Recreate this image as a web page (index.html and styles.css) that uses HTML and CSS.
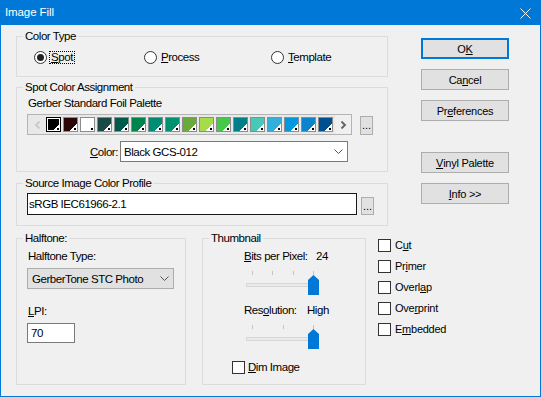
FILE: index.html
```html
<!DOCTYPE html>
<html>
<head>
<meta charset="utf-8">
<title>Image Fill</title>
<link rel="stylesheet" href="styles.css">
</head>
<body>
<div class="window">
  <div class="titlebar">
    <span class="title">Image Fill</span>
    <svg class="close" width="11" height="11" viewBox="0 0 11 11"><path d="M0.5 0.5L10.5 10.5M10.5 0.5L0.5 10.5" stroke="#fff" stroke-width="1" fill="none"/></svg>
  </div>
  <div class="content">
    <div class="top">
      <div class="groups">
        <div class="group g-color">
          <div class="gtitle">Color Type</div>
          <div class="radios">
            <div class="radio r-spot"><span class="rb on"></span><span class="rl focus"><u>S</u>pot</span></div>
            <div class="radio r-process"><span class="rb"></span><span class="rl"><u>P</u>rocess</span></div>
            <div class="radio"><span class="rb"></span><span class="rl"><u>T</u>emplate</span></div>
          </div>
        </div>

        <div class="group g-spot">
          <div class="gtitle">Spot Color Assignment</div>
          <div class="palette-name">Gerber Standard Foil Palette</div>
          <div class="strip-row">
            <div class="strip">
              <div class="arrow a-left"><svg width="7" height="8" viewBox="0 0 7 8"><path d="M5.5 0.5L2 4L5.5 7.5" stroke="#c8c8c8" stroke-width="1.8" fill="none"/></svg></div>
              <div class="swatches">
                <span class="sw sel" style="--c:#000000"></span>
                <span class="sw" style="--c:#2b0707"></span>
                <span class="sw" style="--c:#ffffff"></span>
                <span class="sw" style="--c:#1b4a46"></span>
                <span class="sw" style="--c:#005a4b"></span>
                <span class="sw" style="--c:#00834c"></span>
                <span class="sw" style="--c:#008c74"></span>
                <span class="sw" style="--c:#009170"></span>
                <span class="sw" style="--c:#6aaa3a"></span>
                <span class="sw" style="--c:#a5dc4a"></span>
                <span class="sw" style="--c:#47c84a"></span>
                <span class="sw" style="--c:#007f88"></span>
                <span class="sw" style="--c:#49c8b7"></span>
                <span class="sw" style="--c:#32b0db"></span>
                <span class="sw" style="--c:#0099e0"></span>
                <span class="sw" style="--c:#0a85cc"></span>
                <span class="sw" style="--c:#00508f"></span>
              </div>
              <div class="arrow a-right"><svg width="7" height="8" viewBox="0 0 7 8"><path d="M1.5 0.5L5 4L1.5 7.5" stroke="#606060" stroke-width="1.8" fill="none"/></svg></div>
            </div>
            <div class="dots-btn dots-pal">...</div>
          </div>
          <div class="color-row">
            <span class="clabel"><u>C</u>olor:</span>
            <div class="combo combo-white"><span>Black GCS-012</span><svg class="chev" width="9" height="5" viewBox="0 0 9 5"><path d="M0.5 0.5L4.5 4.5L8.5 0.5" stroke="#555" fill="none"/></svg></div>
          </div>
        </div>

        <div class="group g-source">
          <div class="gtitle">Source Image Color Profile</div>
          <div class="source-row">
            <div class="textbox">sRGB IEC61966-2.1</div>
            <div class="dots-btn dots-src">...</div>
          </div>
        </div>
      </div>

      <div class="buttons">
        <div class="btn default">O<u>K</u></div>
        <div class="btn">Ca<u>n</u>cel</div>
        <div class="btn">Pr<u>e</u>ferences</div>
        <div class="btn btn-gap"><u>V</u>inyl Palette</div>
        <div class="btn"><u>I</u>nfo &gt;&gt;</div>
      </div>
    </div>

    <div class="bottom">
      <div class="group g-halftone">
        <div class="gtitle">Halftone:</div>
        <div class="ht-label">Halftone Type:</div>
        <div class="combo combo-grey"><span>GerberTone STC Photo</span><svg class="chev" width="9" height="5" viewBox="0 0 9 5"><path d="M0.5 0.5L4.5 4.5L8.5 0.5" stroke="#555" fill="none"/></svg></div>
        <div class="lpi-label"><u>L</u>PI:</div>
        <div class="lpi-input">70</div>
      </div>

      <div class="group g-thumb">
        <div class="gtitle">Thumbnail</div>
        <div class="slabel"><span class="sname s-bits"><u>B</u>its per Pixel:</span><span>24</span></div>
        <div class="slider">
          <div class="ticks"><i></i><i></i><i></i><i></i></div>
          <div class="track"></div>
          <div class="thumb"></div>
        </div>
        <div class="slabel slabel2"><span class="sname s-res">Res<u>o</u>lution:</span><span>High</span></div>
        <div class="slider">
          <div class="ticks"><i></i><i></i><i></i></div>
          <div class="track"></div>
          <div class="thumb"></div>
        </div>
        <div class="check dim"><span class="cb"></span><span><u>D</u>im Image</span></div>
      </div>

      <div class="checks">
        <div class="check"><span class="cb"></span><span>C<u>u</u>t</span></div>
        <div class="check"><span class="cb"></span><span>Pr<u>i</u>mer</span></div>
        <div class="check"><span class="cb"></span><span>Overl<u>a</u>p</span></div>
        <div class="check"><span class="cb"></span><span>Ove<u>r</u>print</span></div>
        <div class="check"><span class="cb"></span><span>E<u>m</u>bedded</span></div>
      </div>
    </div>
  </div>
</div>
</body>
</html>
```

FILE: styles.css
```css
* { box-sizing: border-box; }
html, body { margin: 0; padding: 0; }
body {
  width: 541px;
  height: 397px;
  overflow: hidden;
  background: #f0f0f0;
  font-family: "Liberation Sans", Arial, sans-serif;
  font-size: 11.5px;
  letter-spacing: -0.45px;
  color: #000;
}
u { text-decoration: underline; text-underline-offset: 1px; }

.window {
  width: 541px;
  height: 397px;
  border: 1px solid #0078d7;
  border-top: 0;
  background: #f0f0f0;
  display: flex;
  flex-direction: column;
}
.titlebar {
  height: 25px;
  flex: none;
  background: #0078d7;
  color: #fff;
  display: flex;
  align-items: flex-start;
  padding-left: 4px;
  line-height: 25px;
  letter-spacing: -0.1px;
}
.close { margin: 8px 9px 0 auto; }

.content { padding: 11px 0 0 15px; }
.top { display: flex; align-items: flex-start; }
.groups { width: 372px; display: flex; flex-direction: column; }

.group { border: 1px solid #dcdcdc; }
.gtitle {
  width: max-content;
  margin: -8px 0 0 6px;
  padding: 0 2px;
  background: #f0f0f0;
  line-height: 15px;
}

/* Color type */
.g-color { height: 41px; }
.radios { display: flex; margin: 6px 0 0 17px; line-height: 15px; height: 15px; }
.radio { display: flex; align-items: center; }
.r-spot { width: 110px; }
.r-process { width: 127px; }
.rb {
  width: 13px; height: 13px;
  border: 1px solid #333;
  border-radius: 50%;
  background: #fff;
  margin-right: 2px;
  display: flex; align-items: center; justify-content: center;
}
.rb.on::after {
  content: "";
  width: 7px; height: 7px;
  border-radius: 50%;
  background: #222;
}
.rl { border: 1px solid transparent; padding: 0 1px; line-height: 11px; }
.rl.focus { border: 1px dotted #000; }

/* Spot color assignment */
.g-spot { height: 85px; margin-top: 10px; }
.palette-name { margin: 1px 0 0 11px; line-height: 15px; }
.strip-row { display: flex; align-items: flex-end; margin: 3px 0 0 10px; }
.strip {
  width: 325px; height: 21px;
  border: 1px solid #b4b4b4;
  background: #e8e8e8;
  display: flex; align-items: center;
}
.arrow { display: flex; align-items: center; justify-content: center; height: 19px; }
.a-left { width: 18px; }
.a-right { width: 16px; margin-left: 2px; background: #f0f0f0; }
.swatches { display: flex; gap: 2px; }
.sw {
  width: 15px; height: 15px;
  border: 1px solid #8c8c8c;
  background:
    linear-gradient(#000, #000) right 1px bottom 1px / 2px 2px no-repeat,
    linear-gradient(135deg, var(--c) 72%, #fff 72%);
}
.sw.sel {
  border-color: #000;
  box-shadow: inset 0 0 0 1px #fff;
}
.dots-btn {
  width: 13px;
  background: #e1e1e1;
  border: 1px solid #adadad;
  text-align: center;
  letter-spacing: 0;
  font-size: 11px;
}
.dots-pal { height: 19px; line-height: 17px; margin-left: 8px; }
.color-row { display: flex; align-items: center; margin: 6px 0 0 73px; }
.clabel { width: 30px; }
.combo { display: flex; align-items: center; height: 21px; padding-left: 3px; }
.combo .chev { margin-left: auto; }
.combo-white { width: 228px; background: #fff; border: 1px solid #7a7a7a; }
.combo-white .chev { margin-right: 4px; }

/* Source */
.g-source { height: 43px; margin-top: 11px; }
.source-row { display: flex; align-items: flex-end; margin: 2px 0 0 10px; }
.textbox {
  width: 330px; height: 22px;
  background: #fff;
  border: 1px solid #1a1a1a;
  padding-left: 1px;
  line-height: 20px;
}
.dots-src { height: 18px; line-height: 16px; margin-left: 4px; }

/* Buttons */
.buttons {
  margin: 2px 0 0 33px;
  display: flex; flex-direction: column; gap: 10px;
  font-size: 11px;
  letter-spacing: -0.25px;
}
.btn {
  width: 88px; height: 21px;
  background: #e1e1e1;
  border: 1px solid #adadad;
  display: flex; align-items: center; justify-content: center;
}
.btn.default { border: 2px solid #0078d7; }
.btn-gap { margin-top: 21px; }

/* Bottom */
.bottom { display: flex; align-items: flex-start; margin-top: 12px; }
.g-halftone { width: 170px; height: 147px; }
.ht-label { margin: 3px 0 0 11px; line-height: 15px; }
.combo-grey {
  width: 147px;
  margin: 4px 0 0 10px;
  background: #e1e1e1;
  border: 1px solid #adadad;
  padding-left: 4px;
}
.combo-grey .chev { margin-right: 4px; }
.lpi-label { margin: 15px 0 0 11px; line-height: 15px; }
.lpi-input {
  width: 48px; height: 20px;
  margin: 4px 0 0 10px;
  background: #fff;
  border: 1px solid #7a7a7a;
  padding-left: 3px;
  line-height: 18px;
}

.g-thumb { width: 164px; height: 147px; margin-left: 16px; }
.slabel { display: flex; margin: 3px 0 0 41px; line-height: 15px; }
.slabel2 { margin-top: 8px; }
.s-bits { width: 72px; }
.s-res { width: 63px; }
.slider { display: grid; width: 74px; height: 24px; margin: 7px 0 0 43px; }
.slider > * { grid-area: 1 / 1; }
.ticks { display: flex; justify-content: space-between; margin-left: 6px; width: 62px; height: 4px; }
.ticks i { width: 1px; height: 4px; background: #c4c4c4; }
.track { margin-top: 12px; width: 67px; height: 4px; border: 1px solid #d6d6d6; background: #e7eaea; }
.thumb {
  margin: 4px 0 0 62px;
  width: 11px; height: 20px;
  background: #0078d7;
  clip-path: polygon(50% 0, 100% 5px, 100% 100%, 0 100%, 0 5px);
}

.check { display: flex; align-items: center; height: 13px; line-height: 13px; }
.cb { width: 13px; height: 13px; border: 1px solid #333; background: #fff; margin-right: 3px; flex: none; }
.dim { margin: 12px 0 0 29px; }

.checks {
  display: flex; flex-direction: column; gap: 8px; margin: 1px 0 0 12px;
  font-size: 11px;
  letter-spacing: -0.25px;
}
.checks .cb { margin-right: 4px; }
```
